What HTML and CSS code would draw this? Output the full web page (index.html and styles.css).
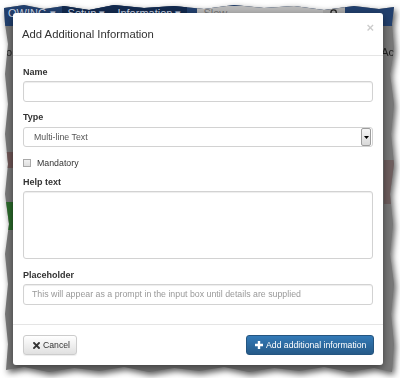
FILE: index.html
```html
<!DOCTYPE html>
<html lang="en">
<head>
    <meta charset="UTF-8">
    <title>Add Additional Information</title>
    <link rel="stylesheet" href="styles.css">
</head>
<body>
    <div class="shot">
        <div class="torn">
            <div class="page">
                <div class="navbar">
                    <span class="brand">OWING ▾</span>
                    <span class="nav-item dark">Setup ▾</span>
                    <span class="nav-item dark">Information ▾</span>
                    <span class="search">Slew</span>
                    <span class="search-btn">
                        <svg width="9" height="9" viewBox="0 0 10 10"><circle cx="4" cy="4" r="3" fill="none" stroke="#222" stroke-width="1.4"/><path d="M6.2 6.2 9 9" stroke="#222" stroke-width="1.6"/></svg>
                    </span>
                </div>
                <div class="page-body">
                    <div class="frag frag-text-left">o</div>
                    <div class="frag frag-brown-left"></div>
                    <div class="frag frag-green-left"></div>
                    <div class="frag frag-text-right">Ac</div>
                    <div class="frag frag-brown-right"></div>
                </div>
            </div>

            <div class="modal">
                <div class="modal-header">
                    <h4 class="modal-title">Add Additional Information</h4>
                    <span class="close">×</span>
                </div>
                <div class="modal-body">
                    <div class="field">
                        <label>Name</label>
                        <div class="input"></div>
                    </div>
                    <div class="field field-type">
                        <label>Type</label>
                        <div class="select">
                            <span>Multi-line Text</span>
                            <span class="select-arrow">
                                <svg width="5" height="3" viewBox="0 0 5 3"><path d="M0 0h5L2.5 3z" fill="#000"/></svg>
                            </span>
                        </div>
                    </div>
                    <div class="check-row">
                        <span class="checkbox"></span>
                        <span>Mandatory</span>
                    </div>
                    <div class="field field-help">
                        <label>Help text</label>
                        <div class="input textarea"></div>
                    </div>
                    <div class="field">
                        <label>Placeholder</label>
                        <div class="input placeholder">This will appear as a prompt in the input box until details are supplied</div>
                    </div>
                </div>
                <div class="modal-footer">
                    <span class="btn btn-default">
                        <svg width="7" height="7" viewBox="0 0 7 7"><path d="M1 1l5 5M6 1 1 6" stroke="#333" stroke-width="1.9" stroke-linecap="square"/></svg>
                        Cancel
                    </span>
                    <span class="btn btn-primary">
                        <svg width="8" height="8" viewBox="0 0 8 8"><path d="M4 0v8M0 4h8" stroke="#fff" stroke-width="2.4"/></svg>
                        Add additional information
                    </span>
                </div>
            </div>
        </div>
    </div>
</body>
</html>
```

FILE: styles.css
```css
body {
    margin: 0;
    background-color: #fff;
    font-family: "Liberation Sans", Arial, sans-serif;
    color: #333;
}
.shot {
    padding: 4px;
    filter: drop-shadow(2px 3px 3px rgba(0, 0, 0, 0.65));
}
.torn {
    position: relative;
    width: 390px;
    height: 370px;
    background-color: #787878;
    clip-path: polygon(0 4px, 20px 1px, 40px 5px, 60px 2px, 85px 6px, 110px 1px, 140px 4px, 170px 2px, 200px 5px, 230px 1px, 260px 4px, 290px 2px, 320px 6px, 350px 2px, 375px 5px, 390px 3px,
        388px 20px, 390px 45px, 386px 70px, 390px 100px, 387px 130px, 390px 160px, 386px 190px, 389px 220px, 386px 250px, 390px 280px, 387px 310px, 390px 340px, 388px 368px,
        370px 364px, 345px 368px, 320px 363px, 295px 367px, 270px 364px, 245px 368px, 220px 363px, 195px 367px, 170px 364px, 145px 368px, 120px 363px, 95px 367px, 70px 364px, 45px 368px, 20px 363px, 2px 366px,
        4px 340px, 1px 310px, 4px 280px, 1px 250px, 5px 220px, 1px 190px, 4px 160px, 1px 130px, 4px 100px, 1px 70px, 4px 40px, 1px 20px);
}
.navbar {
    display: flex;
    align-items: stretch;
    height: 22px;
    background-color: #22406e;
    color: #c9d3e3;
    font-size: 11px;
    line-height: 18px;
}
.brand {
    padding: 0 6px 0 4px;
}
.nav-item {
    padding: 0 6px;
}
.nav-item.dark {
    background-color: #132a4e;
}
.search {
    width: 120px;
    margin: 2px 0 4px 10px;
    padding-left: 6px;
    background-color: #b9b9b9;
    color: #777;
    line-height: 14px;
}
.search-btn {
    display: flex;
    justify-content: center;
    padding-top: 3px;
    width: 22px;
    margin: 2px 0 4px;
    background-color: #a9a9a9;
}
.page-body {
    position: relative;
    height: 348px;
}
.frag {
    position: absolute;
}
.frag-text-left {
    left: 2px;
    top: 20px;
    font-size: 11px;
    color: #222;
}
.frag-brown-left {
    left: 0;
    top: 126px;
    width: 12px;
    height: 16px;
    background-color: #6e5656;
}
.frag-green-left {
    left: 0;
    top: 176px;
    width: 12px;
    height: 28px;
    background-color: #2b6a2b;
}
.frag-text-right {
    right: 0;
    top: 20px;
    font-size: 11px;
    color: #222;
}
.frag-brown-right {
    right: 0;
    top: 134px;
    width: 10px;
    height: 44px;
    background-color: #6e5e5e;
}

.modal {
    position: absolute;
    left: 9px;
    top: 9px;
    width: 370px;
    height: 352px;
    background-color: #fff;
    border-radius: 3px;
    box-shadow: 0 3px 9px rgba(0, 0, 0, 0.5);
}
.modal-header {
    display: flex;
    justify-content: space-between;
    padding: 14px 9px 13px 9px;
    border-bottom: 1px solid #e5e5e5;
}
.modal-title {
    margin: 0;
    font-size: 11.3px;
    line-height: 15px;
    font-weight: normal;
    color: #333;
}
.close {
    margin-top: -6px;
    font-size: 13px;
    line-height: 13px;
    font-weight: bold;
    color: #000;
    opacity: 0.2;
}
.modal-body {
    padding: 10px;
    font-size: 8.8px;
}
.field {
    margin-bottom: 9px;
}
.field label {
    display: block;
    margin-bottom: 3px;
    font-size: 9px;
    line-height: 12px;
    font-weight: bold;
    color: #333;
}
.field-type {
    margin-bottom: 10px;
}
.field-type label {
    margin-bottom: 4px;
}
.field-help {
    margin-bottom: 10px;
}
.input {
    box-sizing: border-box;
    height: 21px;
    padding: 0 8px;
    border: 1px solid #d2d2d2;
    border-radius: 3px;
    box-shadow: inset 0 1px 1px rgba(0, 0, 0, 0.075);
    line-height: 19px;
}
.textarea {
    height: 68px;
}
.placeholder {
    color: #999;
}
.select {
    box-sizing: border-box;
    display: flex;
    align-items: center;
    justify-content: space-between;
    height: 20px;
    padding: 0 1px 0 10px;
    border: 1px solid #d2d2d2;
    border-radius: 3px;
    color: #555;
}
.select-arrow {
    box-sizing: border-box;
    display: flex;
    align-items: center;
    justify-content: center;
    width: 10px;
    height: 18px;
    border: 1px solid #9d9d9d;
    border-radius: 2px;
    background: linear-gradient(#f6f6f6, #d9d9d9);
}
.check-row {
    display: flex;
    align-items: center;
    gap: 6px;
    height: 12px;
    margin-bottom: 7px;
    color: #333;
}
.checkbox {
    box-sizing: border-box;
    width: 8px;
    height: 8px;
    border: 1px solid #a8a8a8;
    background: linear-gradient(#f0f0f0, #dedede);
}
.modal-footer {
    display: flex;
    justify-content: space-between;
    padding: 10px 9px 9px 10px;
    border-top: 1px solid #e5e5e5;
}
.btn {
    box-sizing: border-box;
    display: inline-flex;
    align-items: center;
    gap: 3px;
    height: 20px;
    border-radius: 3px;
    font-size: 8.7px;
}
.btn-default {
    width: 54px;
    padding-left: 9px;
    color: #333;
    border: 1px solid #ccc;
    background: linear-gradient(#fff, #e0e0e0);
    box-shadow: 0 1px 1px rgba(0, 0, 0, 0.075);
}
.btn-primary {
    width: 128px;
    padding-left: 8px;
    color: #fff;
    border: 1px solid #245580;
    background: linear-gradient(#337ab7, #265a88);
}
```
